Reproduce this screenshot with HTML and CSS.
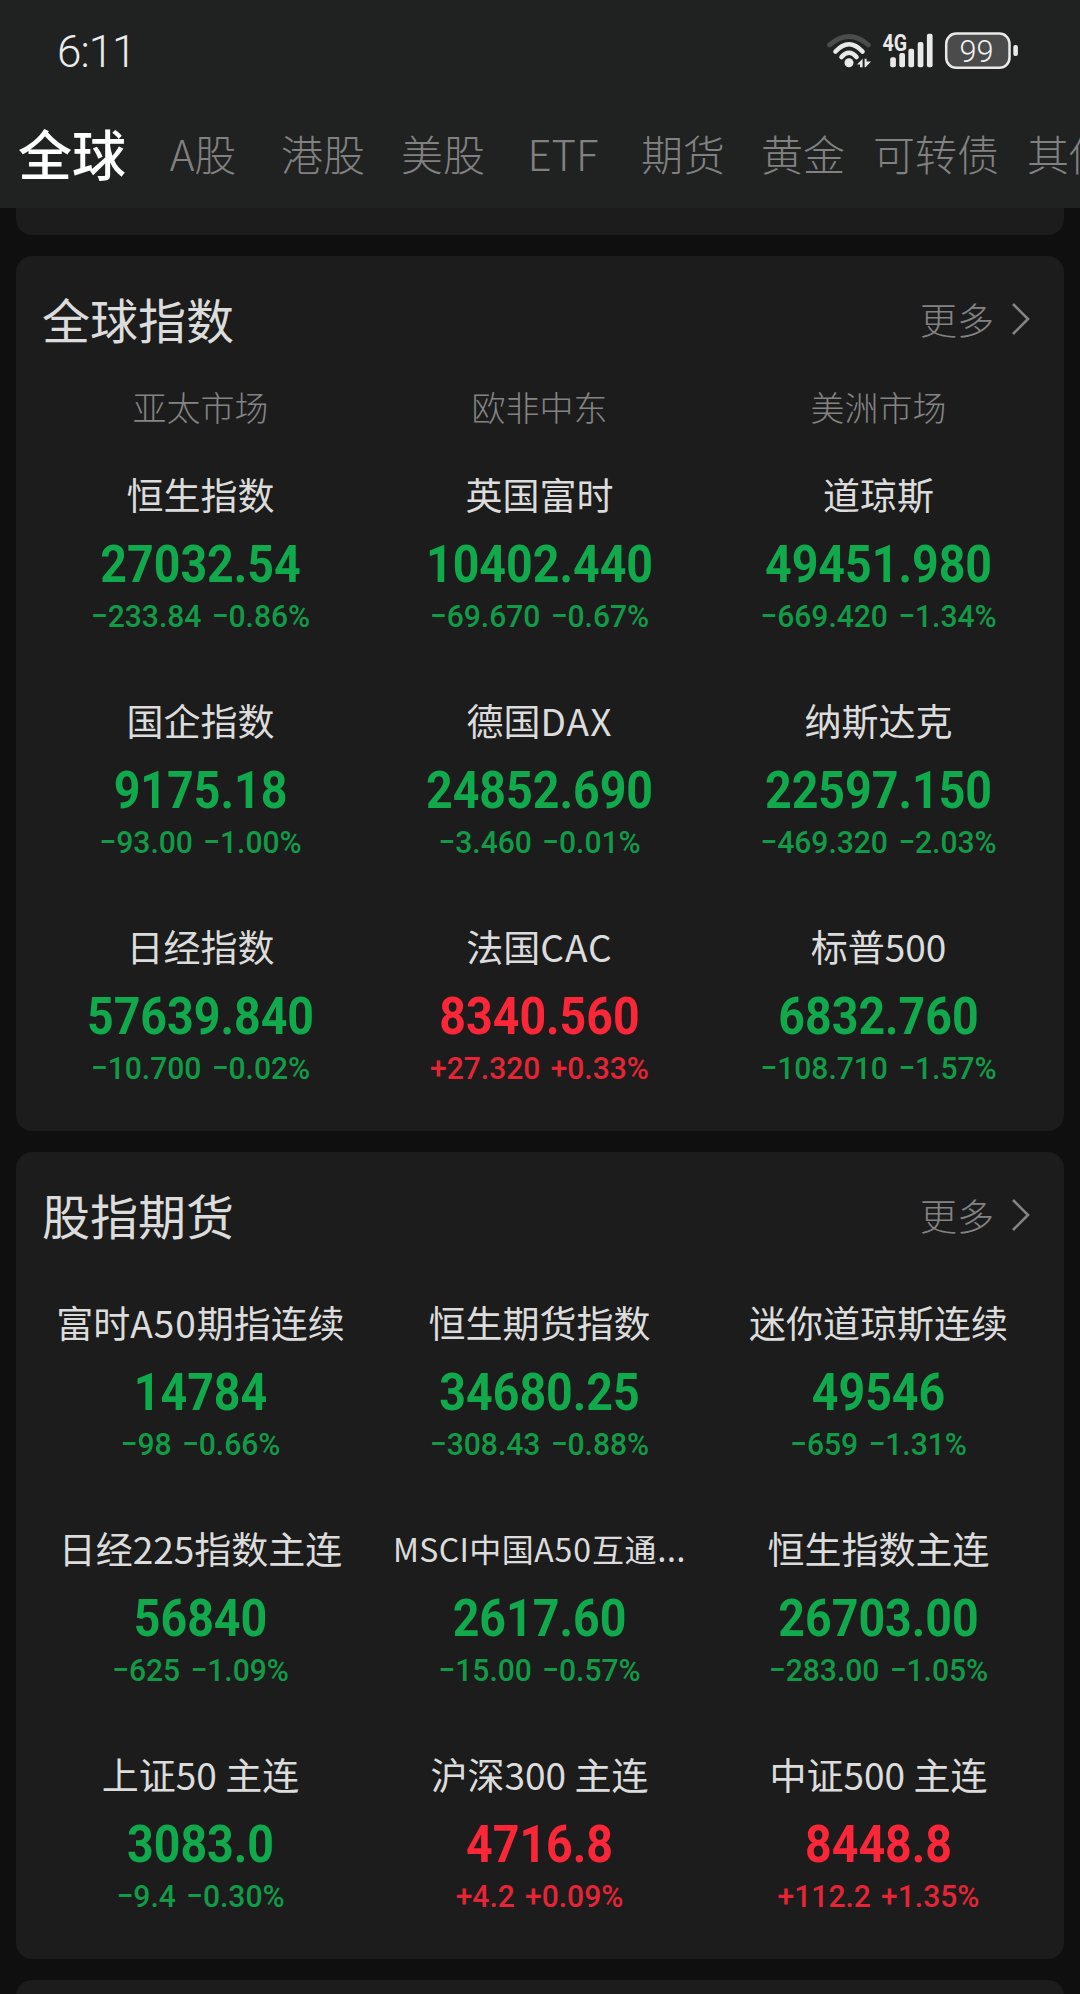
FILE: index.html
```html
<!DOCTYPE html>
<html lang="zh-CN">
<head>
<meta charset="utf-8">
<title>全球行情</title>
<link rel="stylesheet" href="styles.css">
</head>
<body>
<header class="top">
  <div class="status">
    <span class="clock">6:11</span>
    <svg class="status-icons" width="200" height="48" viewBox="824 26 200 48">
      <g fill="none" stroke-linecap="round" stroke-width="4.6">
        <path d="M829.5 45Q849 28 868.500 45" stroke="#4b4c4b"/>
        <path d="M835.500 51.500Q849 37 862.500 51.500" stroke="#e9e9e9"/>
        <path d="M841.500 57Q849 48.500 856.500 57" stroke="#e9e9e9"/>
      </g>
      <circle cx="849" cy="62.800" r="4.500" fill="#e9e9e9"/>
      <path d="M857 64.500L862.600 58.800V67.200H860V64.500ZM864.600 58.800H866.600V61.500H871L865.600 67.200H864.600Z" fill="#e9e9e9"/>
      <text class="net" x="882.500" y="51" textLength="24.500" lengthAdjust="spacingAndGlyphs">4G</text>
      <g fill="#e9e9e9">
        <rect x="890.200" y="57.200" width="5.700" height="10" rx="2"/>
        <rect x="899.300" y="53" width="5.700" height="14.200" rx="2"/>
        <rect x="908.400" y="48.800" width="5.700" height="18.400" rx="2"/>
        <rect x="917.700" y="42" width="5.700" height="25.200" rx="2"/>
        <rect x="926.900" y="33.800" width="5.700" height="33.400" rx="2"/>
        <rect x="1013.300" y="45" width="4.600" height="11" rx="2"/>
      </g>
      <rect x="946.200" y="33.600" width="63.300" height="34.200" rx="10" fill="#4a4b4a" stroke="#e9e9e9" stroke-width="2.500"/>
      <text class="level" x="959.500" y="62" textLength="34" lengthAdjust="spacingAndGlyphs">99</text>
    </svg>
  </div>
  <nav class="tabs">
    <a class="tab active">全球</a>
    <a class="tab">A股</a>
    <a class="tab">港股</a>
    <a class="tab">美股</a>
    <a class="tab">ETF</a>
    <a class="tab">期货</a>
    <a class="tab">黄金</a>
    <a class="tab wide">可转债</a>
    <a class="tab">其他</a>
  </nav>
</header>
<main class="feed">
  <section class="card tail"></section>
  <section class="card">
    <div class="head">
      <h2>全球指数</h2>
      <a class="more">更多<svg width="20" height="34" viewBox="0 0 20 34"><path d="M2 2L17 17L2 32"/></svg></a>
    </div>
    <div class="regions"><span>亚太市场</span><span>欧非中东</span><span>美洲市场</span></div>
    <div class="grid">
      <div class="cell"><div class="name">恒生指数</div><div class="price">27032.54</div><div class="change">−233.84 −0.86%</div></div>
      <div class="cell"><div class="name">英国富时</div><div class="price">10402.440</div><div class="change">−69.670 −0.67%</div></div>
      <div class="cell"><div class="name">道琼斯</div><div class="price">49451.980</div><div class="change">−669.420 −1.34%</div></div>
      <div class="cell"><div class="name">国企指数</div><div class="price">9175.18</div><div class="change">−93.00 −1.00%</div></div>
      <div class="cell"><div class="name">德国<span class="latin">DAX</span></div><div class="price">24852.690</div><div class="change">−3.460 −0.01%</div></div>
      <div class="cell"><div class="name">纳斯达克</div><div class="price">22597.150</div><div class="change">−469.320 −2.03%</div></div>
      <div class="cell"><div class="name">日经指数</div><div class="price">57639.840</div><div class="change">−10.700 −0.02%</div></div>
      <div class="cell up"><div class="name">法国<span class="latin">CAC</span></div><div class="price">8340.560</div><div class="change">+27.320 +0.33%</div></div>
      <div class="cell"><div class="name">标普500</div><div class="price">6832.760</div><div class="change">−108.710 −1.57%</div></div>
    </div>
  </section>
  <section class="card">
    <div class="head">
      <h2>股指期货</h2>
      <a class="more">更多<svg width="20" height="34" viewBox="0 0 20 34"><path d="M2 2L17 17L2 32"/></svg></a>
    </div>
    <div class="grid">
      <div class="cell"><div class="name">富时<span class="latin">A50</span>期指连续</div><div class="price">14784</div><div class="change">−98 −0.66%</div></div>
      <div class="cell"><div class="name">恒生期货指数</div><div class="price">34680.25</div><div class="change">−308.43 −0.88%</div></div>
      <div class="cell"><div class="name">迷你道琼斯连续</div><div class="price">49546</div><div class="change">−659 −1.31%</div></div>
      <div class="cell"><div class="name">日经225指数主连</div><div class="price">56840</div><div class="change">−625 −1.09%</div></div>
      <div class="cell"><div class="name small">MSCI中国<span class="latin">A50</span>互通<span class="dots">…</span></div><div class="price">2617.60</div><div class="change">−15.00 −0.57%</div></div>
      <div class="cell"><div class="name">恒生指数主连</div><div class="price">26703.00</div><div class="change">−283.00 −1.05%</div></div>
      <div class="cell"><div class="name">上证50 主连</div><div class="price">3083.0</div><div class="change">−9.4 −0.30%</div></div>
      <div class="cell up"><div class="name">沪深300 主连</div><div class="price">4716.8</div><div class="change">+4.2 +0.09%</div></div>
      <div class="cell up"><div class="name">中证500 主连</div><div class="price">8448.8</div><div class="change">+112.2 +1.35%</div></div>
    </div>
  </section>
  <section class="card next"></section>
</main>
</body>
</html>
```
FILE: styles.css
```css
* { box-sizing: border-box; }
body {
  margin: 0;
  width: 1080px;
  height: 1994px;
  overflow: hidden;
  background: #0f0f0f;
  color: #dcdcdc;
  font-family: "Noto Sans CJK SC", sans-serif;
}
.top { height: 208px; background: #202221; overflow: hidden; }
.status {
  height: 100px;
  padding: 0 56px 0 57px;
  display: flex;
  justify-content: space-between;
  align-items: center;
}
.clock {
  padding-top: 3px;
  font: 300 44px/60px Roboto, sans-serif;
  letter-spacing: -1px;
  color: #ececec;
}
.net { font: 700 23px Roboto, sans-serif; fill: #e9e9e9; }
.level { font: 300 32px Roboto, sans-serif; fill: #f2f2f2; }
.tabs {
  height: 106px;
  padding-left: 1px;
  display: flex;
  align-items: center;
}
.tab {
  flex: 0 0 120px;
  text-align: center;
  white-space: nowrap;
  font-size: 42px;
  font-weight: 300;
  line-height: 60px;
  color: #808180;
}
.tab.wide { flex-basis: 146px; }
.tab.active {
  flex-basis: 142px;
  font-size: 54px;
  font-weight: 500;
  color: #fff;
}
.feed {
  padding: 0 16px;
  display: flex;
  flex-direction: column;
  gap: 21px;
}
.card { background: #1c1c1c; border-radius: 16px; padding-bottom: 19px; }
.card.tail { height: 27px; border-radius: 0 0 16px 16px; padding: 0; }
.card.next { height: 60px; padding: 0; }
.head {
  height: 110px;
  padding: 13px 33px 0 26px;
  display: flex;
  justify-content: space-between;
  align-items: center;
}
.head h2 { margin: 0; font-size: 48px; font-weight: 400; line-height: 70px; }
.more {
  display: flex;
  align-items: center;
  gap: 17px;
  padding-top: 2px;
  font-size: 37px;
  font-weight: 300;
  line-height: 50px;
  color: #838383;
}
.more svg { fill: none; stroke: #858585; stroke-width: 2.6; }
.regions, .grid { display: grid; grid-template-columns: repeat(3, 339px); margin-left: 15px; }
.regions {
  height: 68px;
  padding-top: 19px;
  font-size: 34px;
  font-weight: 300;
  line-height: 44px;
  text-align: center;
  color: #848484;
}
.grid { grid-auto-rows: 226px; }
.cell { padding-top: 36px; text-align: center; white-space: nowrap; color: #10a94c; }
.cell.up { color: #fb2739; }
.name { height: 65px; font-size: 37px; line-height: 48px; color: #dcdcdc; }
.name.small { font-size: 32px; letter-spacing: .4px; }
.latin { letter-spacing: 1px; }
.dots { font-family: "Open Sans", sans-serif; font-size: 37px; line-height: 1; }
.price { font: 700 52px/60px Roboto, sans-serif; transform: scaleX(.895); }
.change {
  margin-top: 1px;
  font: 500 32px/40px Roboto, sans-serif;
  word-spacing: 3px;
  transform: scaleX(.938);
  opacity: .9;
}
```
